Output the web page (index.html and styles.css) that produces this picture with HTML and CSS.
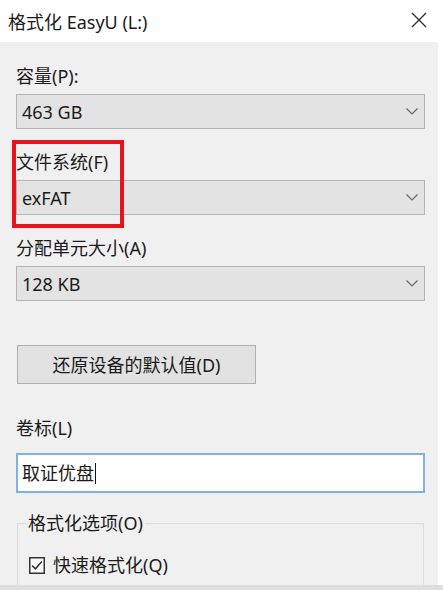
FILE: index.html
```html
<!DOCTYPE html>
<html lang="zh-CN">
<head>
<meta charset="utf-8">
<title>格式化 EasyU (L:)</title>
<link rel="stylesheet" href="styles.css">
</head>
<body>
<div class="window">
  <div class="titlebar">
    <span class="title">格式化 EasyU (L:)</span>
    <svg class="close" width="16" height="16" viewBox="0 0 16 16" aria-hidden="true">
      <path d="M1 1 L15 15 M15 1 L1 15" stroke="#333" stroke-width="1.4" fill="none"/>
    </svg>
  </div>
  <div class="panel">
    <div class="label">容量(P):</div>
    <div class="select">
      <span>463 GB</span>
      <svg class="chev" width="12" height="7" viewBox="0 0 12 7"><path d="M0.5 0.5 L6 6 L11.5 0.5" stroke="#666" stroke-width="1.2" fill="none"/></svg>
    </div>

    <div class="label gap">文件系统(F)</div>
    <div class="select">
      <span>exFAT</span>
      <svg class="chev" width="12" height="7" viewBox="0 0 12 7"><path d="M0.5 0.5 L6 6 L11.5 0.5" stroke="#666" stroke-width="1.2" fill="none"/></svg>
    </div>

    <div class="label gap">分配单元大小(A)</div>
    <div class="select">
      <span>128 KB</span>
      <svg class="chev" width="12" height="7" viewBox="0 0 12 7"><path d="M0.5 0.5 L6 6 L11.5 0.5" stroke="#666" stroke-width="1.2" fill="none"/></svg>
    </div>

    <div class="button">还原设备的默认值(D)</div>

    <div class="label vol">卷标(L)</div>
    <div class="input"><span>取证优盘</span><span class="caret"></span></div>

    <fieldset class="group">
      <legend>格式化选项(O)</legend>
      <div class="check-row">
        <svg class="checkbox" width="16" height="17" viewBox="0 0 16 17">
          <rect x="0.75" y="0.75" width="14.5" height="15.5" fill="#fafafa" stroke="#333" stroke-width="1.5"/>
          <path d="M3.2 8.6 L6.4 11.8 L12.8 4.6" stroke="#333" stroke-width="1.5" fill="none"/>
        </svg>
        <span>快速格式化(Q)</span>
      </div>
    </fieldset>

    <div class="highlight"></div>
  </div>
  <div class="footer"></div>
</div>
</body>
</html>
```

FILE: styles.css
```css
html, body {
  margin: 0;
  padding: 0;
  background: #ffffff;
  overflow: hidden;
}

body {
  font-family: "Noto Sans", "Noto Sans CJK SC", sans-serif;
  font-size: 18px;
  color: #1b1b1b;
}

.window {
  width: 443px;
  height: 590px;
  display: flex;
  flex-direction: column;
}

.titlebar {
  height: 42px;
  flex: 0 0 42px;
  display: flex;
  align-items: center;
  justify-content: space-between;
  padding: 0 16px 0 8px;
  background: #ffffff;
}

.title {
  line-height: 20px;
  margin-top: 2px;
}

.close {
  margin-top: -2px;
}

.panel {
  position: relative;
  width: 438px;
  height: 543px;
  box-sizing: border-box;
  padding: 24px 13px 0 16px;
  background: #f0f0f0;
  overflow: hidden;
  display: flex;
  flex-direction: column;
}

.label {
  line-height: 20px;
  height: 20px;
  margin-bottom: 8px;
  white-space: nowrap;
}

.label.gap {
  margin-top: 23px;
}

.select {
  height: 35px;
  flex: 0 0 35px;
  box-sizing: border-box;
  border: 1px solid #b4b4b4;
  background: #e3e3e3;
  display: flex;
  align-items: center;
  justify-content: space-between;
  padding: 0 6px 0 5px;
  line-height: 20px;
}

.button {
  margin-top: 44px;
  margin-left: 1px;
  width: 239px;
  height: 39px;
  flex: 0 0 39px;
  box-sizing: border-box;
  border: 1px solid #b0b0b0;
  background: #e2e2e2;
  display: flex;
  align-items: center;
  justify-content: center;
  line-height: 20px;
}

.label.vol {
  margin-top: 34px;
  margin-bottom: 15px;
}

.input {
  height: 40px;
  flex: 0 0 40px;
  box-sizing: border-box;
  border: 2px solid #7fb2e8;
  background: #ffffff;
  display: flex;
  align-items: center;
  padding-left: 4px;
  line-height: 20px;
}

.caret {
  display: inline-block;
  width: 1px;
  height: 21px;
  background: #111;
  margin-left: 1px;
}

.group {
  margin: 20px 1px 0 1px;
  padding: 0 0 30px 8px;
  border: 1px solid #dcdcdc;
  min-width: 0;
}

.group legend {
  padding: 0 2px;
  line-height: 20px;
}

.check-row {
  display: flex;
  align-items: center;
  gap: 8px;
  margin-top: 22px;
  margin-left: 3px;
  line-height: 20px;
}

.highlight {
  position: absolute;
  left: 12px;
  top: 98px;
  width: 112px;
  height: 88px;
  box-sizing: border-box;
  border: 4px solid #e8141c;
}

.footer {
  flex: 0 0 5px;
  width: 443px;
  background: #dedede;
}
```
